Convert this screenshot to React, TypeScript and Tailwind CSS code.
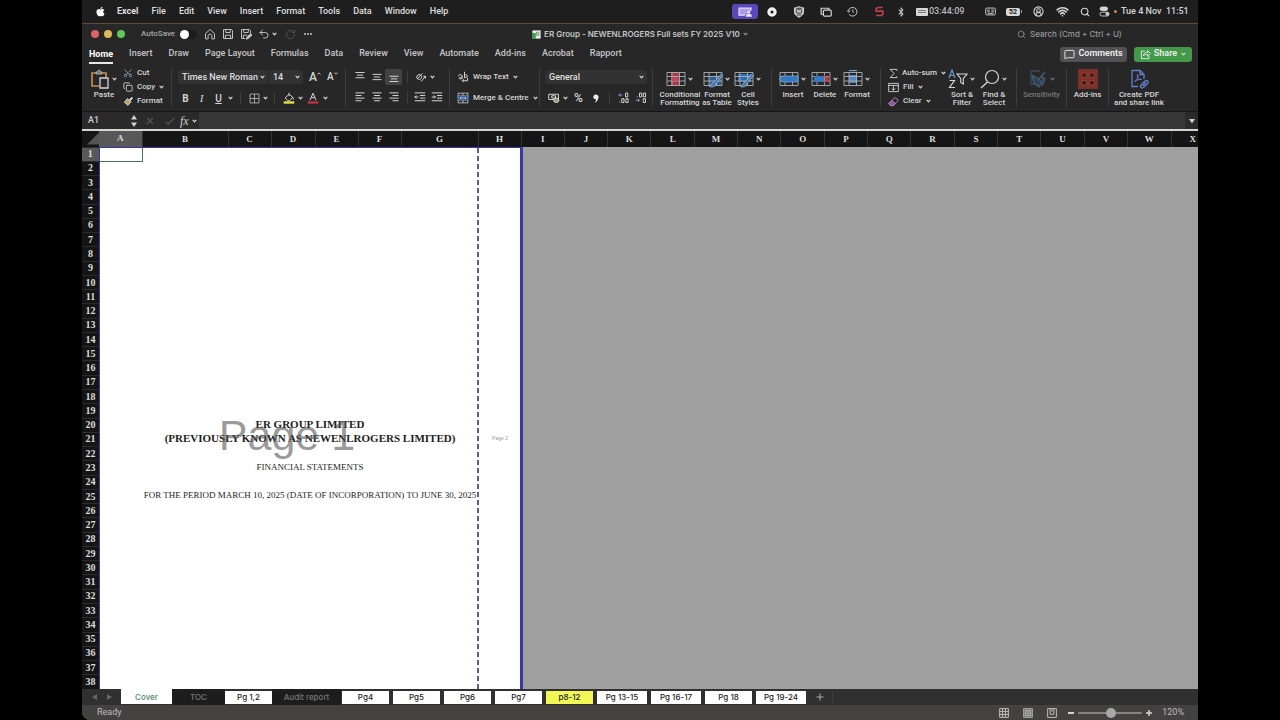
import type { ReactNode } from "react";
import { FaApple, FaBluetoothB } from "react-icons/fa";
import { Wifi, Search, CircleUserRound, Undo2, RotateCw, MessageSquare, Copy as CopyIcon, Scissors } from "lucide-react";

type SvgProps = { className?: string; box?: string; children: ReactNode };

function Svg({ className = "size-3", box = "0 0 16 16", children }: SvgProps) {
  return (
    <svg viewBox={box} className={className} fill="none" stroke="currentColor" strokeWidth="1.3" aria-hidden="true">
      {children}
    </svg>
  );
}

function Caret({ className = "" }: { className?: string }) {
  return (
    <svg viewBox="0 0 6 4" className={"h-1 w-[5px] shrink-0 text-[#cfcfcf] " + className} aria-hidden="true">
      <path d="M0.8 0.7 L3 2.9 L5.2 0.7" fill="none" stroke="currentColor" strokeWidth="1.5" />
    </svg>
  );
}

function MenuBar() {
  const menus = ["File", "Edit", "View", "Insert", "Format", "Tools", "Data", "Window", "Help"];
  return (
    <header className="flex h-[23px] shrink-0 items-center bg-[#1e1e1f] pr-2.5 pl-[13px] text-[9px] font-medium text-[#dedede]">
      <FaApple className="size-[11px] text-white" />
      <nav className="ml-[11px] flex items-center gap-[13px]">
        <button className="font-bold">Excel</button>
        {menus.map((m) => (
          <button key={m}>{m}</button>
        ))}
      </nav>
      <div className="ml-auto flex items-center text-[#d5d5d5]">
        <Slot>
          <span className="flex h-[15px] w-[26px] items-center justify-center rounded-[3px] bg-[#5a48b8] text-[#e6e0ff]">
            <Svg className="h-2.5 w-3.5" box="0 0 20 14">
              <path d="M10 11.500H1.500V1.500H18.500V5" strokeWidth="1.8" fill="#a99de6" />
              <circle cx="15.5" cy="7" r="2.200" fill="currentColor" stroke="none" />
              <path d="M11 13.800c0-6 9-6 9 0z" fill="currentColor" stroke="none" />
            </Svg>
          </span>
        </Slot>
        <Slot>
          <Svg className="size-[10px]">
            <circle cx="8" cy="8" r="5" strokeWidth="5" stroke="#f2f2f2" />
          </Svg>
        </Slot>
        <Slot>
          <Svg>
            <path d="M8 1l6 1.500v6c0 3-3 5-6 6.500C5 13.500 2 11.500 2 8.500v-6z" fill="#bdbdbd" />
            <rect x="4.500" y="4.500" width="7" height="5" rx="1.500" stroke="#444" />
            <path d="M5 12h6M4 3h8" stroke="#444" />
          </Svg>
        </Slot>
        <Slot>
          <Svg>
            <path d="M4 11H1.500V3H12v2" strokeWidth="1.600" />
            <rect x="4.500" y="5.500" width="10.500" height="8" rx="1.500" strokeWidth="1.600" />
          </Svg>
        </Slot>
        <Slot>
          <Svg className="size-[11px]">
            <path d="M3 12a6.300 6.300 0 1 0-1-5" />
            <path d="M0.500 6.500L2 9l2.500-2M8.500 5v3.500l1 1.500" />
          </Svg>
        </Slot>
        <Slot>
          <Svg className="size-[11px]">
            <path d="M13 2.200H5.500L3.200 4v3.500h9.600V12L11 13.800H3" stroke="#c0404c" strokeWidth="2.400" />
          </Svg>
        </Slot>
        <span className="flex w-4 justify-center">
          <FaBluetoothB className="size-[10px]" />
        </span>
        <span className="flex w-[69px] items-center gap-px pl-[7px] text-[#b9b9b9]">
          <span className="flex h-2 w-3 flex-col justify-center gap-px rounded-[1px] bg-[#d8d8d8] px-0.5">
            <i className="h-px bg-[#777]" />
            <i className="h-px bg-[#777]" />
          </span>
          03:44:09
        </span>
        <span className="flex w-6 justify-center">
          <Svg className="size-[11px]">
            <rect x="1" y="3" width="14" height="10" rx="1.500" />
            <path d="M3 6h4M9 6h4M3 8.500h4M9 8.500h4M4 11h8" />
          </Svg>
        </span>
        <span className="flex w-6 items-center justify-center">
          <span className="flex h-2 w-3.5 items-center justify-center rounded-[2px] bg-[#d8d8d8] text-[7px] leading-2 font-bold text-[#222]">52</span>
          <i className="ml-px h-[3px] w-px bg-[#999]" />
        </span>
        <span className="flex w-6 justify-center">
          <CircleUserRound className="size-[11px]" strokeWidth={2.4} />
        </span>
        <span className="flex w-6 justify-center">
          <Wifi className="size-[13px]" strokeWidth={3} />
        </span>
        <span className="flex w-[22px] justify-center">
          <Search className="size-[10px]" strokeWidth={2.6} />
        </span>
        <span className="flex w-[25px] items-center gap-1 pl-[3px]">
          <Svg className="size-[11px]">
            <rect x="1.500" y="1.500" width="11" height="5" rx="2.500" fill="currentColor" />
            <rect x="1.500" y="9" width="13" height="5.500" rx="2.500" />
            <circle cx="12" cy="11.700" r="2.500" fill="currentColor" stroke="none" />
          </Svg>
          <i className="size-[3px] rounded-full bg-[#c98a55]" />
        </span>
        <time className="w-[67px] text-right whitespace-pre">Tue 4 Nov  11:51</time>
      </div>
    </header>
  );
}

function Slot({ children }: { children: ReactNode }) {
  return <span className="flex w-[27px] items-center justify-center">{children}</span>;
}

function QuickButton({ label, children }: { label: string; children: ReactNode }) {
  return (
    <button aria-label={label} className="flex w-[18px] items-center justify-center">
      {children}
    </button>
  );
}

function TitleBar() {
  return (
    <div className="grid h-5 shrink-0 grid-cols-[1fr_auto_1fr] items-center text-[#c4c4c4]">
      <div className="flex items-center pl-[9px]">
        <div className="flex gap-[5px]">
          <button aria-label="Close" className="size-2 rounded-full bg-[#dd6169]" />
          <button aria-label="Minimise" className="size-2 rounded-full bg-[#e0b85b]" />
          <button aria-label="Zoom window" className="size-2 rounded-full bg-[#62c75b]" />
        </div>
        <label className="ml-4 flex items-center gap-[5px] text-[8px] font-medium text-[#a8a8a8]">
          AutoSave
          <input
            type="checkbox"
            className="h-[9px] w-[17px] appearance-none rounded-full bg-[#1c1c1c] before:block before:size-[9px] before:rounded-full before:bg-white before:content-['']"
          />
        </label>
        <div className="ml-1 flex items-center">
          <QuickButton label="Home">
            <Svg>
              <path d="M2 7.500L8 2l6 5.500V14.500H10.500V10c0-2.500-5-2.500-5 0v4.500H2z" />
            </Svg>
          </QuickButton>
          <QuickButton label="Save">
            <Svg>
              <path d="M2 2h10.500L14 3.500V14H2zM5 2v4h6V2M4.500 14V9.500h7V14" />
            </Svg>
          </QuickButton>
          <QuickButton label="Save As">
            <Svg>
              <path d="M7 14H2V2h10.500L14 3.500V7M5 2v4h6V2M4.500 14V9.500h5" />
              <path d="M8.500 15l1-3.500 5-4 1.500 2-5 4.500z" fill="currentColor" />
            </Svg>
          </QuickButton>
          <QuickButton label="Undo">
            <Undo2 className="size-3" strokeWidth={1.9} />
          </QuickButton>
          <Caret className="-ml-px" />
          <span className="flex w-[26px] justify-center text-[#555]">
            <RotateCw className="size-[11px]" strokeWidth={2} />
          </span>
          <button aria-label="More" className="flex gap-px pl-px">
            <i className="size-[2px] rounded-full bg-[#c4c4c4]" />
            <i className="size-[2px] rounded-full bg-[#c4c4c4]" />
            <i className="size-[2px] rounded-full bg-[#c4c4c4]" />
          </button>
        </div>
      </div>
      <h1 className="flex items-center gap-[3px] font-[Inter,sans-serif] text-[8px] font-semibold whitespace-nowrap">
        <Svg className="size-[9px]" box="0 0 12 12">
          <rect x="0.500" y="0.500" width="11" height="11" fill="#e7efe7" stroke="none" />
          <rect x="0" y="4" width="5" height="8" fill="#3f9a51" stroke="none" />
          <path d="M6 3h3v4H6z" stroke="#5d9a68" />
        </Svg>
        ER Group - NEWENLROGERS Full sets FY 2025 V10
        <Caret className="opacity-60" />
      </h1>
      <label className="mr-[65px] flex items-center justify-end gap-1 text-[#989898]">
        <Search className="size-[9px]" strokeWidth={2} />
        <input
          type="search"
          placeholder="Search (Cmd + Ctrl + U)"
          aria-label="Search"
          className="w-[103px] bg-transparent font-[Inter,sans-serif] text-[8px] font-medium outline-none placeholder:text-[#989898]"
        />
      </label>
    </div>
  );
}

function RibbonTabs() {
  const tabs = ["Insert", "Draw", "Page Layout", "Formulas", "Data", "Review", "View", "Automate", "Add-ins", "Acrobat", "Rapport"];
  return (
    <div className="flex h-5 shrink-0 items-center pr-1.5 pl-[7px] text-[9px] font-medium text-[#c6c6c6]">
      <nav className="flex items-center gap-4">
        <button className="border-b-2 border-[#e8e8e8] pt-[2px] font-bold leading-[15px] text-white">Home</button>
        {tabs.map((t) => (
          <button key={t} className="whitespace-nowrap">
            {t}
          </button>
        ))}
      </nav>
      <div className="ml-auto flex gap-[7px] font-semibold text-[#ececec]">
        <button className="flex h-[15px] w-[67px] items-center justify-center gap-[3px] rounded-[3px] bg-[#525254]">
          <MessageSquare className="size-[11px]" strokeWidth={2} />
          Comments
        </button>
        <button className="flex h-[15px] w-[58px] items-center justify-center gap-[3px] rounded-[3px] bg-[#43994a]">
          <Svg className="size-[11px]">
            <path d="M7 3H2v11h11V10" />
            <path d="M5 10c0-4 3-5 6-5V2l4 4.500-4 4V8c-3 0-4.500 0-6 2z" />
          </Svg>
          Share
          <Caret className="ml-px" />
        </button>
      </div>
    </div>
  );
}

function Group({ className, children }: { className: string; children: ReactNode }) {
  return <div className={"my-1 shrink-0 border-r border-[#3d3d3e] " + className}>{children}</div>;
}

function Lines({ kind }: { kind: "top" | "middle" | "bottom" | "left" | "center" | "right" | "outdent" | "indent" }) {
  const paths = {
    top: "M2 2h12M4 5.500h8M2 9h12",
    middle: "M2 4.500h12M4 8h8M2 11.500h12",
    bottom: "M2 7h12M4 10.500h8M2 14h12",
    left: "M2 2.500h12M2 6h8M2 9.500h12M2 13h8",
    center: "M2 2.500h12M4 6h8M2 9.500h12M4 13h8",
    right: "M2 2.500h12M6 6h8M2 9.500h12M6 13h8",
    outdent: "M1 2.500h14M8 6h7M8 9.500h7M1 13h14M6 8H1M3 6L1 8l2 2",
    indent: "M1 2.500h14M8 6h7M8 9.500h7M1 13h14M1 8h5M4 6l2 2-2 2",
  };
  return (
    <Svg className="size-3">
      <path d={paths[kind]} />
    </Svg>
  );
}

function IconCell({ label, className = "w-[17px]", children }: { label: string; className?: string; children: ReactNode }) {
  return (
    <button aria-label={label} className={"flex h-4 shrink-0 items-center justify-center rounded-[2px] " + className}>
      {children}
    </button>
  );
}

function Divider({ className = "" }: { className?: string }) {
  return <i className={"h-3 w-px shrink-0 bg-[#3d3d3e] " + className} />;
}

function BigButton({ lines, icon, caret = true, className, dim = false }: { lines: string[]; icon: ReactNode; caret?: boolean; className: string; dim?: boolean }) {
  return (
    <button className={"flex shrink-0 flex-col items-center " + className + (dim ? " opacity-45" : "")}>
      <span className={"relative flex h-[22px] items-center justify-center " + (caret ? "-ml-2" : "")}>
        {icon}
        {caret && <Caret className="absolute top-[9px] left-full ml-0.5" />}
      </span>
      <span className="mt-px flex flex-col text-center leading-2 whitespace-nowrap">
        {lines.map((l) => (
          <span key={l}>{l}</span>
        ))}
      </span>
    </button>
  );
}

function GridIcon({ kind }: { kind: "conditional" | "table" | "styles" | "insert" | "delete" | "format" }) {
  return (
    <Svg className="h-[18px] w-5" box="0 0 20 18">
      {kind === "conditional" && <rect x="5" y="2" width="8" height="14" fill="#a83a48" stroke="none" />}
      {kind === "table" && <rect x="6" y="6" width="12" height="9" fill="#315f91" stroke="none" />}
      {kind === "styles" && <rect x="4" y="4" width="13" height="8" fill="#2f6caf" stroke="none" />}
      {kind === "format" && <rect x="6" y="5" width="8" height="8" fill="#4d86c4" stroke="none" />}
      <path d="M1 2.500H19V15.500H1zM1 6.500H19M1 11H19M6 2.500V15.500M13.500 2.500V15.500" stroke="#a9b0b5" strokeWidth="0.900" />
      {kind === "conditional" && <path d="M6 7h6v4H6z" fill="#c64755" stroke="none" />}
      {(kind === "table" || kind === "styles") && (
        <path d="M18.500 3.500L11 12c-2 0-2 3-4.500 4.500 3 1 6 0 6.500-3L20 5" fill="#4577ac" stroke="#9dbbd8" strokeWidth="0.800" />
      )}
      {kind === "insert" && <path d="M0 9l3-3h16v6H3z" fill="#3479c2" stroke="#82aeda" strokeWidth="0.700" />}
      {kind === "delete" && (
        <>
          <rect x="3" y="6" width="10" height="6" fill="#3479c2" stroke="none" />
          <path d="M13 5.500l6 7M19 5.500l-6 7" stroke="#c04250" strokeWidth="1.800" />
        </>
      )}
      {kind === "format" && <path d="M6 0.500h8" stroke="#7ea4c9" />}
    </Svg>
  );
}

const selectClass = "h-[14px] appearance-none rounded-[2px] bg-[#323233] pl-1 text-[9px] font-medium leading-[14px] text-[#dedede] outline-none";

function Picker({ label, value, className }: { label: string; value: string; className: string }) {
  return (
    <label className={"relative block shrink-0 " + className}>
      <select aria-label={label} className={"w-full " + selectClass}>
        <option>{value}</option>
      </select>
      <Caret className="absolute top-[5px] right-[3px]" />
    </label>
  );
}

function Ribbon() {
  return (
    <div className="flex h-12 shrink-0 overflow-hidden border-b border-[#161616] text-[8px] font-medium text-[#d6d6d6]">
      <Group className="flex w-[90px]">
        <BigButton
          className="ml-2 w-7"
          lines={["Paste"]}
          icon={
            <Svg className="size-5" box="0 0 20 20">
              <path d="M9 17H2V4h14v4" stroke="#c58d52" strokeWidth="1.700" />
              <path d="M6 5V3h1.500c0-2.500 3-2.500 3 0H12v2z" fill="#777" stroke="#bbb" strokeWidth="0.800" />
              <path d="M10 9h8v10h-8z" fill="#2a2a2b" />
            </Svg>
          }
        />
        <div className="-mt-[2px] ml-[5px] flex h-[42px] flex-col">
          <button className="flex h-[14px] items-center">
            <span className="w-[14px]"><Scissors className="size-[10px] -rotate-90 text-[#8aa4bd]" strokeWidth={2} /></span>Cut
          </button>
          <button className="flex h-[14px] items-center">
            <span className="w-[14px]"><CopyIcon className="size-[10px]" strokeWidth={2} /></span>Copy<Caret className="ml-1" />
          </button>
          <button className="flex h-[14px] items-center">
            <span className="w-[14px]">
              <Svg className="size-[10px]">
                <path d="M10 6l4-4 1.500 1.500-4 4z" fill="#ddd" />
                <path d="M7 4l6 5-5 6-6-5z" fill="#b8a66c" />
              </Svg>
            </span>
            Format
          </button>
        </div>
      </Group>

      <Group className="flex w-[174px] flex-col gap-[6px] pt-0.5 pl-[6px]">
        <div className="flex items-center">
          <Picker label="Font" value="Times New Roman" className="w-[90px]" />
          <Picker label="Font size" value="14" className="ml-px w-[34px]" />
          <button aria-label="Increase font size" className="ml-[6px] flex w-[18px] text-[12px] leading-[14px]">
            A<Svg className="mt-0.5 h-[3px] w-1" box="0 0 6 4"><path d="M0.800 3.500L3 1l2.200 2.500" /></Svg>
          </button>
          <button aria-label="Decrease font size" className="flex text-[10px] leading-[14px]">
            A<Svg className="mt-0.5 h-[3px] w-1" box="0 0 6 4"><path d="M0.800 0.500L3 3l2.200-2.500" /></Svg>
          </button>
        </div>
        <div className="flex h-4 items-center text-[10px]">
          <IconCell label="Bold" className="w-[15px]"><b>B</b></IconCell>
          <IconCell label="Italic"><i className="font-['Liberation_Serif'] text-[11px]">I</i></IconCell>
          <IconCell label="Underline"><u>U</u></IconCell>
          <Caret className="ml-px" />
          <Divider className="ml-[7px]" />
          <IconCell label="Borders" className="ml-[4px] w-[18px]">
            <Svg className="size-[11px]"><path d="M1.500 1.500h13v13h-13zM8 1.500v13M1.500 8h13" strokeWidth="1" /></Svg>
          </IconCell>
          <Caret />
          <Divider className="ml-1.5" />
          <IconCell label="Fill colour" className="ml-[5px] w-[18px]">
            <Svg>
              <path d="M3 8l5-5 5 4-4 4.500H6zM8 1v4M13 7l1 3" />
              <path d="M1 14h14" stroke="#e8ec44" strokeWidth="3" />
            </Svg>
          </IconCell>
          <Caret />
          <IconCell label="Font colour" className="w-[20px]">
            <Svg>
              <path d="M4 11L8 1.500 12 11M5.500 7.500h5" />
              <path d="M1 14h14" stroke="#c9303e" strokeWidth="3" />
            </Svg>
          </IconCell>
          <Caret />
        </div>
      </Group>

      <Group className="flex w-[104px] flex-col gap-[4px] pt-px pl-[5px]">
        <div className="flex items-center">
          <IconCell label="Top align"><Lines kind="top" /></IconCell>
          <IconCell label="Middle align"><Lines kind="middle" /></IconCell>
          <IconCell label="Bottom align" className="w-[17px] bg-[#434344]"><Lines kind="bottom" /></IconCell>
          <Divider className="ml-[5px]" />
          <IconCell label="Orientation" className="ml-[3px] w-[19px]">
            <Svg>
              <path d="M3 10l7-7M3 6a3 3 0 0 0 5 4 3 3 0 0 0-5-4zM8 14l6-7M14 10V7h-3" />
            </Svg>
          </IconCell>
          <Caret />
        </div>
        <div className="flex items-center">
          <IconCell label="Align left"><Lines kind="left" /></IconCell>
          <IconCell label="Centre"><Lines kind="center" /></IconCell>
          <IconCell label="Align right"><Lines kind="right" /></IconCell>
          <Divider className="ml-[5px]" />
          <IconCell label="Decrease indent" className="ml-[3px] w-[17px]"><Lines kind="outdent" /></IconCell>
          <IconCell label="Increase indent"><Lines kind="indent" /></IconCell>
        </div>
      </Group>

      <Group className="flex w-[90px] flex-col gap-[5px] pt-px pl-[7px]">
        <button className="flex h-4 items-center gap-1">
          <Svg className="size-3">
            <path d="M2 7c0-3 5-3 5 0v3M7 8c-6 0-5 4 0 2M10 1v8M10 6c4-3 6 3 0 3M14 9v4H7M9 11l-2 2 2 2" />
          </Svg>
          Wrap Text<Caret />
        </button>
        <button className="flex h-4 items-center gap-1 whitespace-nowrap">
          <Svg className="size-3 shrink-0">
            <rect x="1.500" y="1.500" width="13" height="13" strokeWidth="1" />
            <rect x="1.500" y="5" width="13" height="6" fill="#315f91" stroke="#7f9fc0" strokeWidth="0.800" />
            <path d="M4 8h8M5.500 6.500L4 8l1.500 1.500M10.500 6.500L12 8l-1.500 1.500M8 1.500V5M8 11v3.500" strokeWidth="1" />
          </Svg>
          Merge &amp; Centre<Caret />
        </button>
      </Group>

      <Group className="flex w-[113px] flex-col gap-[6px] pt-0.5 pl-[5px]">
        <Picker label="Number format" value="General" className="w-[102px]" />
        <div className="flex h-4 items-center">
          <IconCell label="Currency">
            <Svg className="size-3">
              <path d="M1 3h13v7H1zM5 5h5v3H5z" />
              <ellipse cx="11" cy="11" rx="3.500" ry="3" fill="#99997a" />
            </Svg>
          </IconCell>
          <Caret className="ml-px" />
          <IconCell label="Percent" className="ml-0.5 w-[17px] text-[12px]">%</IconCell>
          <IconCell label="Comma style" className="w-[18px]">
            <Svg className="size-3"><path d="M4.500 5.500a3.500 3.500 0 1 1 6.500 3q-1 4-4.500 6 1.500-3 1.500-5a3.500 3.500 0 0 1-3.500-4z" fill="#eee" stroke="none" /></Svg>
          </IconCell>
          <Divider className="ml-1" />
          <IconCell label="Increase decimal" className="ml-[5px] w-[17px]">
            <Svg className="size-3">
              <path d="M6 4H1M3 2L1 4l2 2" stroke="#7ba0c6" />
              <path d="M10 1.500h3v5h-3zM5 9h3v5H5zM10.500 9h3v5h-3zM2 13v1" />
            </Svg>
          </IconCell>
          <IconCell label="Decrease decimal">
            <Svg className="size-3">
              <path d="M1 11h5M4 9l2 2-2 2" stroke="#7ba0c6" />
              <path d="M6 1.500h3v5H6zM11 1.500h3v5h-3zM11 9h3v5h-3zM3 6v1" />
            </Svg>
          </IconCell>
        </div>
      </Group>

      <Group className="flex w-[119px] pl-[4px]">
        <BigButton className="w-[46px]" lines={["Conditional", "Formatting"]} icon={<GridIcon kind="conditional" />} />
        <BigButton className="w-[28px]" lines={["Format", "as Table"]} icon={<GridIcon kind="table" />} />
        <BigButton className="w-[34px]" lines={["Cell", "Styles"]} icon={<GridIcon kind="styles" />} />
      </Group>

      <Group className="flex w-[109px] pl-[5px]">
        <BigButton className="w-8" lines={["Insert"]} icon={<GridIcon kind="insert" />} />
        <BigButton className="w-8" lines={["Delete"]} icon={<GridIcon kind="delete" />} />
        <BigButton className="w-8" lines={["Format"]} icon={<GridIcon kind="format" />} />
      </Group>

      <Group className="flex w-[136px] pl-[7px]">
        <div className="-mt-[2px] flex h-[42px] w-[58px] flex-col whitespace-nowrap">
          <button className="flex h-[14px] items-center">
            <span className="w-[15px]"><Svg className="size-[11px]"><path d="M13 4V2H3l6 6-6 6h10v-2" /></Svg></span>
            Auto-sum<Caret className="ml-1" />
          </button>
          <button className="flex h-[14px] items-center">
            <span className="w-[15px]"><Svg className="size-[11px]"><path d="M1 2h14v12H1zM1 5h14M8 6v6M5.500 9.500L8 12l2.500-2.500" /></Svg></span>
            Fill<Caret className="ml-1" />
          </button>
          <button className="flex h-[14px] items-center">
            <span className="w-[15px]">
              <Svg className="size-[11px]">
                <path d="M10 2l5 4-7 8H4l-3-3z" stroke="#b98ac4" />
                <path d="M5.500 6.500l5 4.500-3 3H4l-3-3z" fill="#8f559c" stroke="#b98ac4" />
              </Svg>
            </span>
            Clear<Caret className="ml-1" />
          </button>
        </div>
        <BigButton
          className="w-8"
          lines={["Sort &", "Filter"]}
          icon={
            <Svg className="size-5" box="0 0 20 20">
              <path d="M1 9l3-8 3 8M2 6.500h4" stroke="#6d9ac8" strokeWidth="1.200" />
              <path d="M1.500 11.500h5l-5 7h5.500" strokeWidth="1.200" />
              <path d="M9 5h10l-3.700 4.500V15l-2.600-1.500v-4z" strokeWidth="1.100" />
            </Svg>
          }
        />
        <BigButton
          className="w-8"
          lines={["Find &", "Select"]}
          icon={
            <Svg className="size-5" box="0 0 20 20">
              <circle cx="12" cy="8" r="6.500" strokeWidth="1.200" />
              <path d="M7.500 13L1 19" strokeWidth="1.400" />
            </Svg>
          }
        />
      </Group>

      <Group className="flex w-[50px] justify-center">
        <BigButton
          dim
          className="w-10"
          lines={["Sensitivity"]}
          icon={
            <Svg className="size-5" box="0 0 20 20">
              <path d="M3 2h9M3 2v13h4" stroke="#55799b" />
              <path d="M17 3l-6 7M4 6l5 3 5 4-3 5-5-4zM13 7l4 3-3 7" stroke="#6f9ac4" fill="#3c6288" />
            </Svg>
          }
        />
      </Group>

      <Group className="flex w-[42px] justify-center">
        <BigButton
          caret={false}
          className="w-10"
          lines={["Add-ins"]}
          icon={
            <Svg className="size-5" box="0 0 20 20">
              <rect width="20" height="20" fill="#7d3027" stroke="none" />
              <path d="M4 4h4.500v4.500H4zM11.500 4H16v4.500h-4.500zM4 11.500h4.500V16H4zM11.500 11.500H16V16h-4.500z" fill="#31201f" stroke="#a24434" strokeWidth="0.800" />
            </Svg>
          }
        />
      </Group>

      <div className="my-1 flex pl-1">
        <BigButton
          caret={false}
          className="w-[52px]"
          lines={["Create PDF", "and share link"]}
          icon={
            <Svg className="size-5 text-[#6480cc]" box="0 0 20 20">
              <path d="M9 17.500H3V1.500h8l4 4V10M11 1.500v4h4" />
              <path d="M5.500 12.500c3-2 4-6 3-7-1 0 0 5 4 5-2-.5-5 .5-7 2z" strokeWidth="1" />
              <path d="M12 16l4-4c2-1.500 4 .5 2.500 2.500l-4 4c-2 1.500-4-.5-2.500-2.500zM13.500 17l3.500-3.500" />
            </Svg>
          }
        />
      </div>
    </div>
  );
}

function FormulaBar() {
  return (
    <div className="flex h-[17px] shrink-0 items-center bg-[#2a2a2b] text-[9px] text-[#cfcfcf]">
      <input aria-label="Name box" defaultValue="A1" className="w-[46px] bg-transparent pl-1.5 font-medium outline-none" />
      <button aria-label="Name box list" className="flex w-3 justify-center">
        <Svg className="h-3 w-2" box="0 0 8 12">
          <path d="M4 0l3 4.500H1zM4 12L1 7.500h6z" fill="currentColor" stroke="none" />
        </Svg>
      </button>
      <button aria-label="Cancel" className="flex w-5 justify-center text-[#555]">
        <Svg className="size-2"><path d="M2 2l12 12M14 2L2 14" strokeWidth="2.500" /></Svg>
      </button>
      <button aria-label="Enter" className="flex w-5 justify-center text-[#555]">
        <Svg className="size-2.5"><path d="M1 9l4 4L15 3" strokeWidth="2.200" /></Svg>
      </button>
      <span className="w-3 font-['Liberation_Serif'] text-[12px] italic leading-[16px]">fx</span>
      <Caret />
      <input aria-label="Formula" className="ml-0.5 h-full min-w-0 flex-1 bg-[#373738] px-1 outline-none" />
      <button aria-label="Expand formula bar" className="flex w-[13px] justify-center">
        <Svg className="size-1.5" box="0 0 6 6"><path d="M0 1h6L3 5.500z" fill="currentColor" stroke="none" /></Svg>
      </button>
    </div>
  );
}

const coverText: Record<number, { text: string; style: string }> = {
  20: { text: "ER GROUP LIMITED", style: "font-bold text-[11px]" },
  21: { text: "(PREVIOUSLY KNOWN AS NEWENLROGERS LIMITED)", style: "font-bold text-[11px]" },
  23: { text: "FINANCIAL STATEMENTS", style: "text-[9px]" },
  25: { text: "FOR THE PERIOD MARCH 10, 2025 (DATE OF INCORPORATION) TO JUNE 30, 2025", style: "text-[9px]" },
};

function Sheet() {
  const letters = "ABCDEFGHIJKLMNOPQRSTUVW".split("");
  const rows = Array.from({ length: 38 }, (_, i) => i + 1);
  return (
    <main className="relative min-h-0 flex-1 overflow-hidden border-t-2 border-[#d4d6cf] bg-[#a0a0a0] font-['Liberation_Serif',serif]">
      <table className="h-full w-full table-fixed border-collapse text-[#1d1d1d]">
        <colgroup>
          <col className="w-[17px]" />
          <col className="w-[43px]" />
          <col className="w-[86px]" />
          <col className="w-[43px]" />
          <col className="w-[44px]" />
          <col className="w-[43px]" />
          <col className="w-[43px]" />
          <col className="w-[77px]" />
          <col className="w-[43px]" />
          {letters.slice(8).map((l) => (
            <col key={l} />
          ))}
          <col className="w-[27px]" />
        </colgroup>
        <thead>
          <tr className="h-4 bg-[#151515] text-[9px] leading-[15px] text-[#dcdcdc]">
            <th className="p-0">
              <Svg className="ml-auto h-[13px] w-3" box="0 0 12 12"><path d="M12 0v12H0z" fill="#555" stroke="none" /></Svg>
            </th>
            {letters.map((l) => (
              <th key={l} scope="col" className={l === "A" ? "bg-[#585858] p-0" : "border-l border-[#333] p-0"}>
                {l}
              </th>
            ))}
            <th scope="col" className="border-l border-[#333] p-0 pr-0.5 text-right">X</th>
          </tr>
        </thead>
        <tbody>
          {rows.map((r) => (
            <tr key={r} className="leading-3">
              <th scope="row" className={"border-t border-[#2c2c2c] p-0 text-[10px] text-[#dcdcdc] " + (r === 1 ? "bg-[#585858]" : "bg-[#151515]")}>
                {r}
              </th>
              {r === 1 ? (
                <>
                  <td className="border border-[#44715a] bg-white p-0" />
                  <td colSpan={7} className="bg-white p-0" />
                </>
              ) : (
                <td colSpan={8} className={"bg-white p-0 text-center align-top whitespace-nowrap " + (coverText[r]?.style ?? "text-[9px]")}>
                  {coverText[r]?.text}
                </td>
              )}
              {r === 1 && <td colSpan={16} rowSpan={38} className="p-0" />}
            </tr>
          ))}
        </tbody>
      </table>
      <div className="pointer-events-none absolute top-4 bottom-0 left-[17px] w-[424px] border-t border-r-[3px] border-l border-[#3a36a8]">
        <div className="absolute inset-y-0 left-[377px] w-0.5 bg-[repeating-linear-gradient(to_bottom,#5c58b0_0_5px,transparent_5px_8px)]" />
        <div className="absolute inset-y-0 left-0 flex w-[374px] items-center justify-center pt-[34px] font-['Liberation_Sans'] text-[43px] text-[#555]/60">
          Page 1
        </div>
        <div className="absolute inset-y-0 right-0 flex w-[40px] items-center justify-center pt-10 font-['Liberation_Sans'] text-[5px] text-[#999]">
          Page 2
        </div>
      </div>
    </main>
  );
}

function SheetTabs() {
  const tabs = [
    { name: "Pg4", style: "w-[47px] bg-white" },
    { name: "Pg5", style: "w-[47px] bg-white" },
    { name: "Pg6", style: "w-[47px] bg-white" },
    { name: "Pg7", style: "w-[47px] bg-white" },
    { name: "p8-12", style: "w-[47px] bg-[#f2f755]" },
    { name: "Pg 13-15", style: "w-[50px] bg-white" },
    { name: "Pg 16-17", style: "w-[50px] bg-white" },
    { name: "Pg 18", style: "w-[47px] bg-white" },
    { name: "Pg 19-24", style: "w-[50px] bg-white" },
  ];
  return (
    <nav className="flex h-4 shrink-0 items-center bg-[#303031] font-[Inter,sans-serif] text-[8px] font-medium whitespace-nowrap text-[#222]">
      <button aria-label="Previous sheet" className="ml-2.5 text-[#666]"><Svg className="size-1.5" box="0 0 6 6"><path d="M5 0v6L0 3z" fill="currentColor" stroke="none" /></Svg></button>
      <button aria-label="Next sheet" className="ml-2 text-[#666]"><Svg className="size-1.5" box="0 0 6 6"><path d="M1 0v6l5-3z" fill="currentColor" stroke="none" /></Svg></button>
      <button className="ml-[9px] h-[15px] w-[51px] self-start bg-white pt-px text-[#4f8a66]">Cover</button>
      <button className="h-full w-[53px] bg-[#1d1d1e] text-[#777]">TOC</button>
      <button className="h-[13px] w-[47px] bg-white">Pg 1,2</button>
      <button className="h-full w-[69px] bg-[#1d1d1e] text-[#777]">Audit report</button>
      <div className="ml-px flex gap-1">
        {tabs.map((t) => (
          <button key={t.name} className={"h-[13px] " + t.style}>
            {t.name}
          </button>
        ))}
      </div>
      <button aria-label="Add sheet" className="ml-2.5 text-[#aaa]"><Svg className="size-2"><path d="M8 1v14M1 8h14" strokeWidth="2" /></Svg></button>
      <Divider className="ml-2" />
    </nav>
  );
}

function StatusBar() {
  return (
    <footer className="flex h-[15px] shrink-0 items-center bg-[#434241] pr-3.5 pl-[15px] text-[9px] text-[#bdbdbd]">
      <span>Ready</span>
      <div className="ml-auto flex items-center">
        <button aria-label="Normal view" className="flex w-6 justify-center"><Svg className="size-2.5"><path d="M1 1h14v14H1zM1 5.700h14M1 10.300h14M5.700 1v14M10.300 1v14" strokeWidth="1.600" /></Svg></button>
        <button aria-label="Page layout view" className="flex w-6 justify-center"><Svg className="size-2.5"><path d="M1 1h14v14H1z" fill="#777" /><path d="M4 4h8v8H4zM6 6.500h4M6 9h4" /></Svg></button>
        <button aria-label="Page break view" className="flex w-6 justify-center"><Svg className="size-2.5"><path d="M1 1h14v14H1zM5 1v9h6V1M8 1v5" strokeWidth="1.600" /></Svg></button>
        <button aria-label="Zoom out" className="flex w-3.5 justify-center"><i className="h-[2px] w-1.5 bg-[#d5d5d5]" /></button>
        <input
          type="range"
          aria-label="Zoom"
          min={0}
          max={100}
          defaultValue={52}
          className="h-[2px] w-16 appearance-none rounded bg-[#858585] [&::-webkit-slider-thumb]:size-2.5 [&::-webkit-slider-thumb]:appearance-none [&::-webkit-slider-thumb]:rounded-full [&::-webkit-slider-thumb]:bg-[#a8a8a8]"
        />
        <button aria-label="Zoom in" className="flex w-3.5 justify-center text-[#d5d5d5]"><Svg className="size-1.5"><path d="M8 0v16M0 8h16" strokeWidth="4" /></Svg></button>
        <span className="w-7 text-right">120%</span>
      </div>
    </footer>
  );
}

export default function App() {
  return (
    <div className="h-screen bg-black px-[82px] font-[Roboto,sans-serif]">
      <div className="flex h-full flex-col overflow-hidden rounded-bl-lg bg-[#272728]">
        <MenuBar />
        <div className="h-px shrink-0 bg-[#5f4a3c]" />
        <TitleBar />
        <RibbonTabs />
        <Ribbon />
        <FormulaBar />
        <Sheet />
        <SheetTabs />
        <StatusBar />
      </div>
    </div>
  );
}
